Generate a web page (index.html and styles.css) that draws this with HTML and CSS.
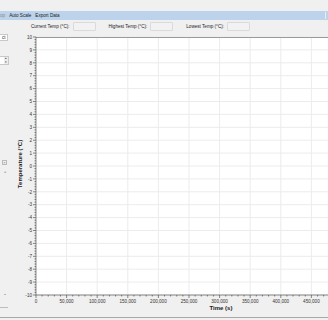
FILE: index.html
```html
<!DOCTYPE html>
<html lang="en">
<head>
    <meta charset="UTF-8">
    <title>Temperature Monitor</title>
    <link rel="stylesheet" href="styles.css">
</head>
<body>
    <div class="window">
        <div class="titlespace"></div>

        <div class="menubar">
            <span class="menu-item disabled">op</span>
            <span class="menu-item">Auto Scale</span>
            <span class="menu-item">Export Data</span>
            <span class="menu-end"></span>
        </div>

        <div class="main">
            <div class="sidebar">
                <div class="combo">ct</div>
                <div class="spin"><span class="spin-arrows">&#9652;<br>&#9662;</span></div>
                <div class="close-box">&times;</div>
                <div class="grip">=</div>
                <div class="chevron">&#711;</div>
                <div class="side-line"></div>
            </div>

            <div class="content">
                <div class="stats">
                    <label>Current Temp (°C):</label>
                    <div class="readout"></div>
                    <label>Highest Temp (°C):</label>
                    <div class="readout"></div>
                    <label>Lowest Temp (°C):</label>
                    <div class="readout"></div>
                </div>

                <svg class="chart" id="chart" width="318" height="284" viewBox="0 0 318 284"></svg>
            </div>
        </div>

        <div class="statusline"></div>
    </div>

    <script>
        (function () {
            // geometria del grafico (px dentro del svg)
            const plotLeft = 26, plotTop = 4, plotBottom = 262, plotRight = 340;
            const pxPerStep = 30.6;   // un paso de 50,000 s
            const pxPerDeg = 12.9;    // un grado
            const ns = "http://www.w3.org/2000/svg";
            const svg = document.getElementById("chart");

            function add(tag, attrs, text) {
                const el = document.createElementNS(ns, tag);
                for (const k in attrs) el.setAttribute(k, attrs[k]);
                if (text !== undefined) el.textContent = text;
                svg.appendChild(el);
                return el;
            }

            const yOf = t => plotTop + (10 - t) * pxPerDeg;
            const xOf = s => plotLeft + s / 50000 * pxPerStep;

            add("rect", { x: plotLeft, y: plotTop, width: plotRight - plotLeft, height: plotBottom - plotTop, class: "plot-bg" });

            // grid
            for (let t = -10; t <= 10; t++) {
                add("line", { x1: plotLeft, x2: plotRight, y1: yOf(t), y2: yOf(t), class: "grid" });
            }
            for (let s = 50000; s <= 500000; s += 50000) {
                add("line", { x1: xOf(s), x2: xOf(s), y1: plotTop, y2: plotBottom, class: "grid" });
            }

            add("line", { x1: plotLeft, x2: plotRight, y1: plotTop + 0.5, y2: plotTop + 0.5, class: "plot-top" });

            // eje y con marcas menores
            add("line", { x1: plotLeft, x2: plotLeft, y1: plotTop, y2: plotBottom, class: "axis" });
            for (let i = 0; i <= 100; i++) {
                const y = plotTop + i * pxPerDeg / 5;
                const len = i % 5 === 0 ? 3 : 1.5;
                add("line", { x1: plotLeft - len, x2: plotLeft, y1: y, y2: y, class: "axis" });
            }
            for (let t = 10; t >= -10; t--) {
                add("text", { x: plotLeft - 4, y: yOf(t) + 1.7, class: "tick-label", "text-anchor": "end" }, t);
            }

            // eje x con marcas menores
            add("line", { x1: plotLeft, x2: plotRight, y1: plotBottom, y2: plotBottom, class: "axis" });
            for (let i = 0; i <= 55; i++) {
                const x = plotLeft + i * pxPerStep / 5;
                const len = i % 5 === 0 ? 3 : 1.5;
                add("line", { x1: x, x2: x, y1: plotBottom, y2: plotBottom + len, class: "axis" });
            }
            for (let s = 0; s <= 450000; s += 50000) {
                add("text", { x: xOf(s), y: plotBottom + 7.5, class: "tick-label", "text-anchor": "middle" },
                    s.toString().replace(/\B(?=(\d{3})+(?!\d))/g, ","));
            }

            // titulos de los ejes
            add("text", { x: 211, y: 277, class: "axis-title", "text-anchor": "middle" }, "Time (s)");
            add("text", { x: 0, y: 0, class: "axis-title", "text-anchor": "middle",
                transform: "translate(12 131) rotate(-90)" }, "Temperature (°C)");
        })();
    </script>
</body>
</html>
```

FILE: styles.css
```css
html, body {
    margin: 0;
    padding: 0;
}

body {
    font-family: "Liberation Sans", Arial, sans-serif;
    background-color: #f0f0f0;
    width: 328px;
    height: 320px;
    overflow: hidden;
}

.window {
    display: flex;
    flex-direction: column;
    height: 320px;
}

.titlespace {
    height: 12px;
}

.menubar {
    display: flex;
    align-items: center;
    height: 9px;
    background-color: #bcd3eb;
    font-size: 4.6px;
    color: #1a1a1a;
    gap: 4px;
}

.menu-item.disabled {
    color: #8a8a8a;
}

.menu-end {
    margin-left: auto;
    width: 1px;
    height: 7px;
    margin-right: 2px;
    background-color: #e4eef8;
    box-shadow: 3px 0 0 #6b7d90;
}

.main {
    display: flex;
    flex: 1;
}

/* panel de la izquierda, casi oculto */
.sidebar {
    width: 10px;
    display: flex;
    flex-direction: column;
    font-size: 4.5px;
    color: #333;
}

.combo {
    margin-top: 14px;
    width: 8px;
    height: 7px;
    box-sizing: border-box;
    background-color: #fff;
    border: 1px solid #c8c8c8;
    border-left: none;
    line-height: 5px;
    padding-left: 2px;
}

.spin {
    margin-top: 15px;
    width: 9px;
    height: 9px;
    box-sizing: border-box;
    background-color: #fff;
    border: 1px solid #c8c8c8;
    border-left: none;
    position: relative;
}

.spin-arrows {
    position: absolute;
    right: 0;
    top: 0;
    width: 4px;
    font-size: 3px;
    line-height: 3.5px;
    text-align: center;
    background-color: #ececec;
    height: 7px;
}

.close-box {
    margin-top: 95px;
    margin-left: 2px;
    width: 5px;
    height: 5px;
    box-sizing: border-box;
    border: 1px solid #bbb;
    font-size: 4px;
    line-height: 3px;
    text-align: center;
    color: #777;
}

.grip {
    margin-top: 5px;
    margin-left: 4px;
    font-size: 4px;
    line-height: 4px;
    color: #888;
}

.chevron {
    margin-top: 120px;
    margin-left: 4px;
    font-size: 6px;
    line-height: 4px;
    color: #777;
}

.side-line {
    margin-top: 9px;
    width: 8px;
    height: 1px;
    background-color: #bdbdbd;
}

.content {
    flex: 1;
    display: flex;
    flex-direction: column;
}

.stats {
    display: flex;
    align-items: center;
    height: 13px;
    padding-left: 21px;
    font-size: 4.6px;
    color: #222;
}

.stats label {
    margin-right: 3px;
}

.readout {
    width: 23px;
    height: 9px;
    box-sizing: border-box;
    border: 1px solid #dadada;
    border-radius: 1px;
    background-color: #f2f2f2;
    margin-right: 13px;
}

.chart {
    display: block;
}

.plot-bg {
    fill: #fff;
}

.grid {
    stroke: #ececec;
    stroke-width: 1;
}

.plot-top {
    stroke: #9a9a9a;
    stroke-width: 1;
}

.axis {
    stroke: #3c3c3c;
    stroke-width: 0.6;
}

.tick-label {
    font-family: "Liberation Sans", Arial, sans-serif;
    font-size: 4.6px;
    fill: #333;
}

.axis-title {
    font-family: "Liberation Sans", Arial, sans-serif;
    font-size: 6px;
    font-weight: bold;
    fill: #1a1a1a;
}

.statusline {
    height: 2px;
    border-top: 1px solid #a8a8a8;
}
```
